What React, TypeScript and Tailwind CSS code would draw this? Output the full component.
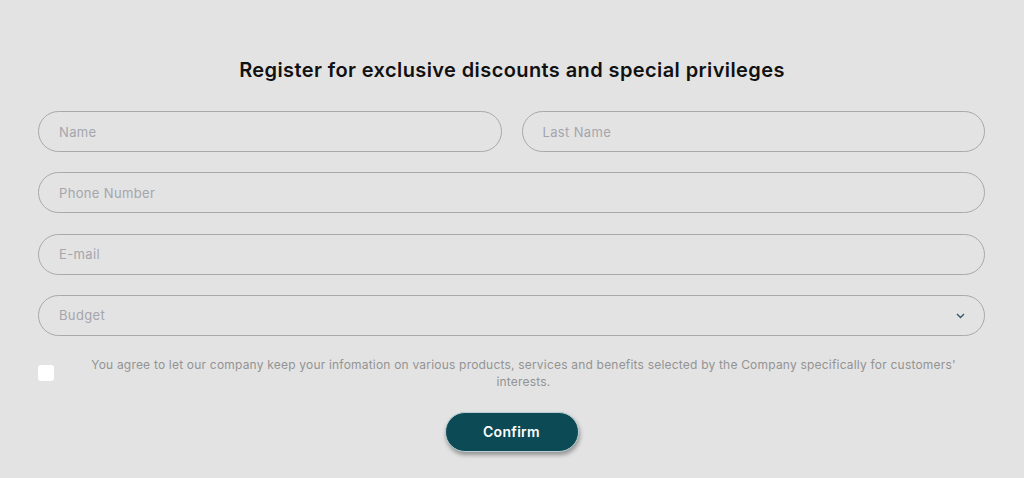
import React from "react";

const inputCls =
  "h-[41px] w-full rounded-full border border-[#a9a9a9] bg-transparent px-5 text-[13px] tracking-[0.35px] text-[#555] placeholder:text-[#a5a5ad] outline-none";

export default function App() {
  return (
    <div
      className="min-h-[478px] w-full bg-[#e3e3e3] px-[38px] pt-[56px]"
      style={{ fontFamily: "Inter, 'Noto Sans', Arial, sans-serif" }}
    >
      <h1 className="text-center text-[20px] font-semibold leading-[28px] text-[#111] tracking-[0.4px]">
        Register for exclusive discounts and special privileges
      </h1>
      <form className="mt-[27px] flex w-[947px] flex-col gap-[20.33px]">
        <div className="grid grid-cols-2 gap-[20px]">
          <input className={inputCls} placeholder="Name" />
          <input className={inputCls} placeholder="Last Name" />
        </div>
        <input className={inputCls} placeholder="Phone Number" />
        <input className={inputCls} placeholder="E-mail" />
        <div className="relative">
          <div className={inputCls + " flex items-center text-[#a5a5ad]"}>Budget</div>
          <svg
            className="absolute right-[20px] top-[18px]"
            width="9"
            height="6"
            viewBox="0 0 9 6"
            fill="none"
          >
            <path d="M1 1l3.5 3.5L8 1" stroke="#2f5a66" strokeWidth="1.4" />
          </svg>
        </div>
        <div className="flex items-center">
          <div className="h-[16px] w-[16px] shrink-0 rounded-[3px] bg-white" />
          <p className="flex-1 px-[22px] pl-[30px] text-center text-[12px] leading-[17px] tracking-[0.2px] text-[#939393]">
            You agree to let our company keep your infomation on various products, services and benefits selected by the Company specifically for customers' interests.
          </p>
        </div>
        <div className="mt-[1px] flex justify-center">
          <button
            type="button"
            className="h-[40px] w-[134px] rounded-full border border-[#b8d0d4] bg-[#0c4a55] text-[14px] font-semibold tracking-[0.3px] text-white shadow-[1px_3px_4px_rgba(0,0,0,0.35)]"
          >
            Confirm
          </button>
        </div>
      </form>
    </div>
  );
}
